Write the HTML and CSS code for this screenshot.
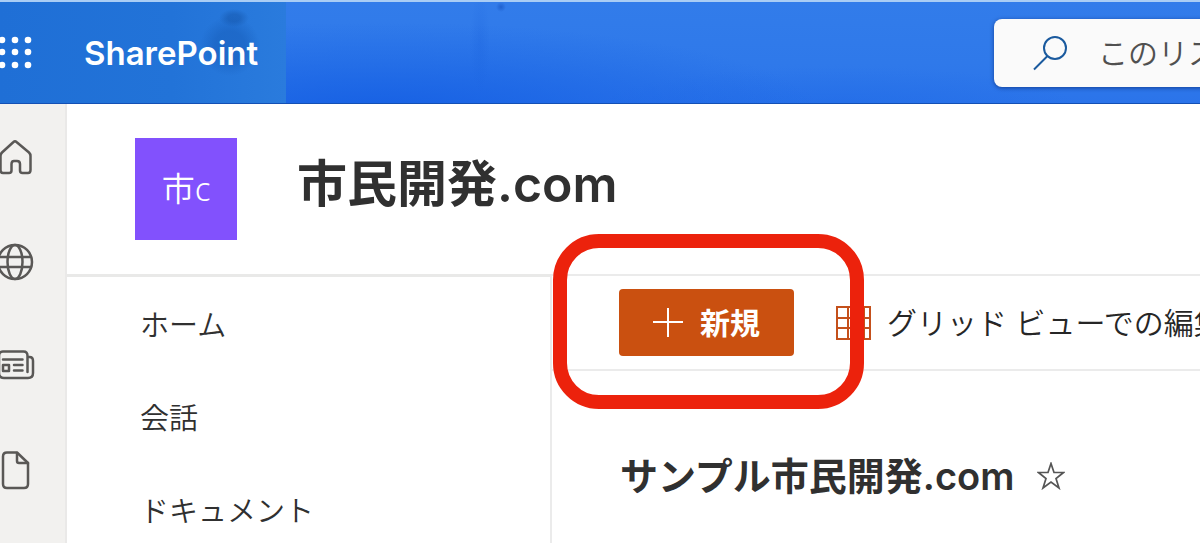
FILE: index.html
```html
<!DOCTYPE html>
<html lang="ja">
<head>
  <meta charset="UTF-8">
  <title>市民開発.com - SharePoint</title>
  <meta name="viewport" content="width=device-width, initial-scale=1.0">
  <link rel="stylesheet" href="styles.css">
</head>
<body>

  <header class="suite-bar">
    <div class="suite-brand">
      <button class="waffle" type="button" aria-label="アプリ起動ツール">
        <svg width="34" height="34" viewBox="0 0 34 34" fill="#fff">
          <circle cx="2" cy="4" r="3.300"/><circle cx="15" cy="4" r="3.300"/><circle cx="28" cy="4" r="3.300"/>
          <circle cx="2" cy="16" r="3.300"/><circle cx="15" cy="16" r="3.300"/><circle cx="28" cy="16" r="3.300"/>
          <circle cx="2" cy="29" r="3.300"/><circle cx="15" cy="29" r="3.300"/><circle cx="28" cy="29" r="3.300"/>
        </svg>
      </button>
      <a class="suite-name" href="#">SharePoint</a>
    </div>
    <label class="search">
      <svg width="36" height="36" viewBox="0 0 36 36" fill="none" stroke="#1a5a9e" stroke-width="2">
        <circle cx="22" cy="13" r="11"/>
        <path d="M14.500 21L1 34.500"/>
      </svg>
      <input type="search" placeholder="このリストを検索" aria-label="このリストを検索">
    </label>
  </header>

  <div class="shell">
    <nav class="rail" aria-label="アプリ バー">
      <a href="#" aria-label="ホーム">
        <svg width="36" height="40" viewBox="0 0 36 40">
          <path d="M13.500 4Q15 2.500 16.500 4L29 14.500Q30.500 16 30.500 18V32Q30.500 35 28 35H22.500Q20 35 20 32.500V26Q20 23 17 23H14Q11.500 23 11.500 26V32.500Q11.500 35 9 35H3Q.5 35 .5 32V18Q.5 16 2 14.500Z"/>
        </svg>
      </a>
      <a href="#" aria-label="サイト">
        <svg width="36" height="40" viewBox="0 0 36 40">
          <circle cx="15" cy="20" r="17"/>
          <ellipse cx="15" cy="20" rx="7.500" ry="17"/>
          <path d="M-1 15H31M-1 25H31"/>
        </svg>
      </a>
      <a href="#" aria-label="ニュース">
        <svg width="36" height="40" viewBox="0 0 36 40">
          <path d="M27.500 26V10Q27.500 5.500 23.500 5.500H3Q-1 5.500 -1 10V27Q-1 32 4 32H28Q33 32 33 27V15Q33 11 29.500 11H28"/>
          <path d="M3 13.500H22.500M14 19H22.500M14 24.500H22.500M3 19H9V25H3Z"/>
        </svg>
      </a>
      <a href="#" aria-label="ファイル">
        <svg width="36" height="40" viewBox="0 0 36 40">
          <path d="M7 2.500H17L28 13V34Q28 38 24 38H7Q3 38 3 34V6.500Q3 2.500 7 2.500Z"/>
          <path d="M17 3V11Q17 13 19 13H28"/>
        </svg>
      </a>
    </nav>

    <div class="site">
      <div class="site-header">
        <div class="site-logo">市c</div>
        <h1>市民開発.com</h1>
      </div>

      <div class="site-body">
        <nav class="quick-nav" aria-label="サイト ナビゲーション">
          <a href="#">ホーム</a>
          <a href="#">会話</a>
          <a href="#">ドキュメント</a>
        </nav>

        <main>
          <div class="command-bar">
            <div class="new-item">
              <button class="btn-new" type="button">
                <svg width="30" height="30" viewBox="0 0 30 30" stroke="#fff" stroke-width="2">
                  <path d="M15 0V29M0 14H30"/>
                </svg>
                新規
              </button>
              <div class="highlight"></div>
            </div>
            <button class="btn-grid" type="button">
              <svg width="35" height="34" viewBox="0 0 35 34" fill="none" stroke="#c4501b" stroke-width="2">
                <path d="M1 1H34V33H1ZM1 12H34M1 22H34M12 1V33M28 1V33"/>
              </svg>
              グリッド ビューでの編集
            </button>
          </div>

          <div class="list-title">
            <h2>サンプル市民開発.com</h2>
            <button class="star" type="button" aria-label="お気に入り">
              <svg width="28" height="28" viewBox="0 0 28 28" fill="none" stroke="#555" stroke-width="1.700">
                <path d="M14 1.500L17 10.500H26.500L19 16.500L22 26L14 20L6 26L9 16.500L1.500 10.500H11Z"/>
              </svg>
            </button>
          </div>
        </main>
      </div>
    </div>
  </div>

</body>
</html>
```
FILE: styles.css
```css
* {
  box-sizing: border-box;
}

body {
  margin: 0;
  height: 100vh;
  overflow: hidden;
  display: flex;
  flex-direction: column;
  font-family: Inter, "Noto Sans CJK JP", sans-serif;
  color: #303030;
  background: #fff;
}

a {
  color: inherit;
  text-decoration: none;
}

button {
  padding: 0;
  border: none;
  background: none;
  font-family: inherit;
  cursor: pointer;
}

svg {
  display: block;
  flex: none;
}

/* top bar */
.suite-bar {
  flex: none;
  height: 104px;
  display: flex;
  justify-content: space-between;
  align-items: center;
  overflow: hidden;
  border-top: 2px solid #a9cdf5;
  border-bottom: 1px solid #1450b4;
  background:
    radial-gradient(ellipse 5px 5px at 501px 5px, rgba(20, 80, 190, 0.6), transparent),
    radial-gradient(ellipse 10px 50px at 480px 40px, rgba(20, 90, 215, 0.2), transparent),
    radial-gradient(ellipse 440px 90px at 380px 110px, rgba(18, 92, 226, 0.8), transparent),
    radial-gradient(ellipse 240px 40px at 840px 104px, rgba(30, 105, 230, 0.5), transparent),
    linear-gradient(to bottom, #327cea, #2f79ea 60%, #2b74ea);
}

.suite-brand {
  flex: none;
  width: 286px;
  height: 100%;
  display: flex;
  align-items: center;
  gap: 50px;
  background:
    radial-gradient(ellipse 15px 9px at 234px 16px, rgba(20, 85, 170, 0.5) 40%, transparent),
    radial-gradient(ellipse 30px 30px at 230px 44px, rgba(22, 92, 185, 0.5) 50%, transparent),
    linear-gradient(to right, #1f6fd6, #2273d8 60%, #2a7bdd);
}

.suite-name {
  font-size: 33px;
  font-weight: 600;
  line-height: 40px;
  color: #fff;
}

.search {
  flex: none;
  width: 600px;
  height: 68px;
  margin-left: auto;
  margin-right: -394px;
  padding-left: 39px;
  display: flex;
  align-items: center;
  gap: 27px;
  border-radius: 8px;
  background: #fafafa;
  box-shadow: 0 1px 4px rgba(0, 30, 100, 0.6);
}

.search input {
  flex: 1;
  border: none;
  outline: none;
  background: none;
  font-family: inherit;
  font-size: 30px;
  font-weight: 350;
}

.search input::placeholder {
  color: #505050;
}

.shell {
  flex: 1;
  min-height: 0;
  display: flex;
}

/* left icon rail */
.rail {
  flex: none;
  width: 67px;
  padding-top: 2px;
  background: #f2f1ef;
  border-right: 2px solid #eae9e8;
}

.rail a {
  height: 104px;
  display: flex;
  align-items: center;
}

.rail svg {
  fill: none;
  stroke: #5a5856;
  stroke-width: 2.5;
  stroke-linejoin: round;
  stroke-linecap: round;
}

.site {
  flex: 1;
  min-width: 0;
  display: flex;
  flex-direction: column;
}

.site-header {
  flex: none;
  height: 170px;
  padding: 34px 68px;
  display: flex;
  gap: 60px;
}

.site-logo {
  width: 102px;
  height: 102px;
  display: flex;
  align-items: center;
  justify-content: center;
  background: #8251fd;
  color: #fff;
  font-family: "Noto Sans", "Noto Sans CJK JP", sans-serif;
  font-size: 33px;
  font-weight: 350;
  line-height: 40px;
}

h1 {
  margin: 0;
  font-size: 50px;
  font-weight: 600;
  line-height: 92px;
}

.site-body {
  flex: 1;
  min-height: 0;
  display: flex;
}

.quick-nav {
  flex: none;
  width: 485px;
  padding-top: 2px;
  border-top: 3px solid #e9e9e8;
  border-right: 2px solid #ebebeb;
}

.quick-nav a {
  display: block;
  padding-left: 73px;
  font-size: 29px;
  font-weight: 350;
  line-height: 93px;
}

main {
  flex: 1;
  min-width: 0;
  border-top: 2px solid #ebebeb;
}

.command-bar {
  padding: 13px 0 13px 67px;
  display: flex;
  align-items: center;
  gap: 42px;
  white-space: nowrap;
  border-bottom: 2px solid #ebebeb;
}

.new-item {
  position: relative;
}

.btn-new {
  width: 175px;
  height: 67px;
  display: flex;
  align-items: center;
  justify-content: center;
  gap: 17px;
  border-radius: 4px;
  background: #ca5010;
  color: #fff;
  font-size: 30px;
  font-weight: 600;
  line-height: 40px;
}

/* red frame round the button */
.highlight {
  position: absolute;
  inset: -55px -70px -53px -66px;
  border: 14px solid #ec220c;
  border-radius: 46px;
  pointer-events: none;
  z-index: 1;
}

.btn-grid {
  display: flex;
  align-items: center;
  gap: 16px;
  font-size: 30px;
  font-weight: 350;
  line-height: 40px;
  color: #262626;
}

.list-title {
  padding: 77px 0 0 68px;
  display: flex;
  align-items: center;
  gap: 23px;
}

h2 {
  margin: 0;
  font-size: 38px;
  font-weight: 600;
  line-height: 56px;
}
```
